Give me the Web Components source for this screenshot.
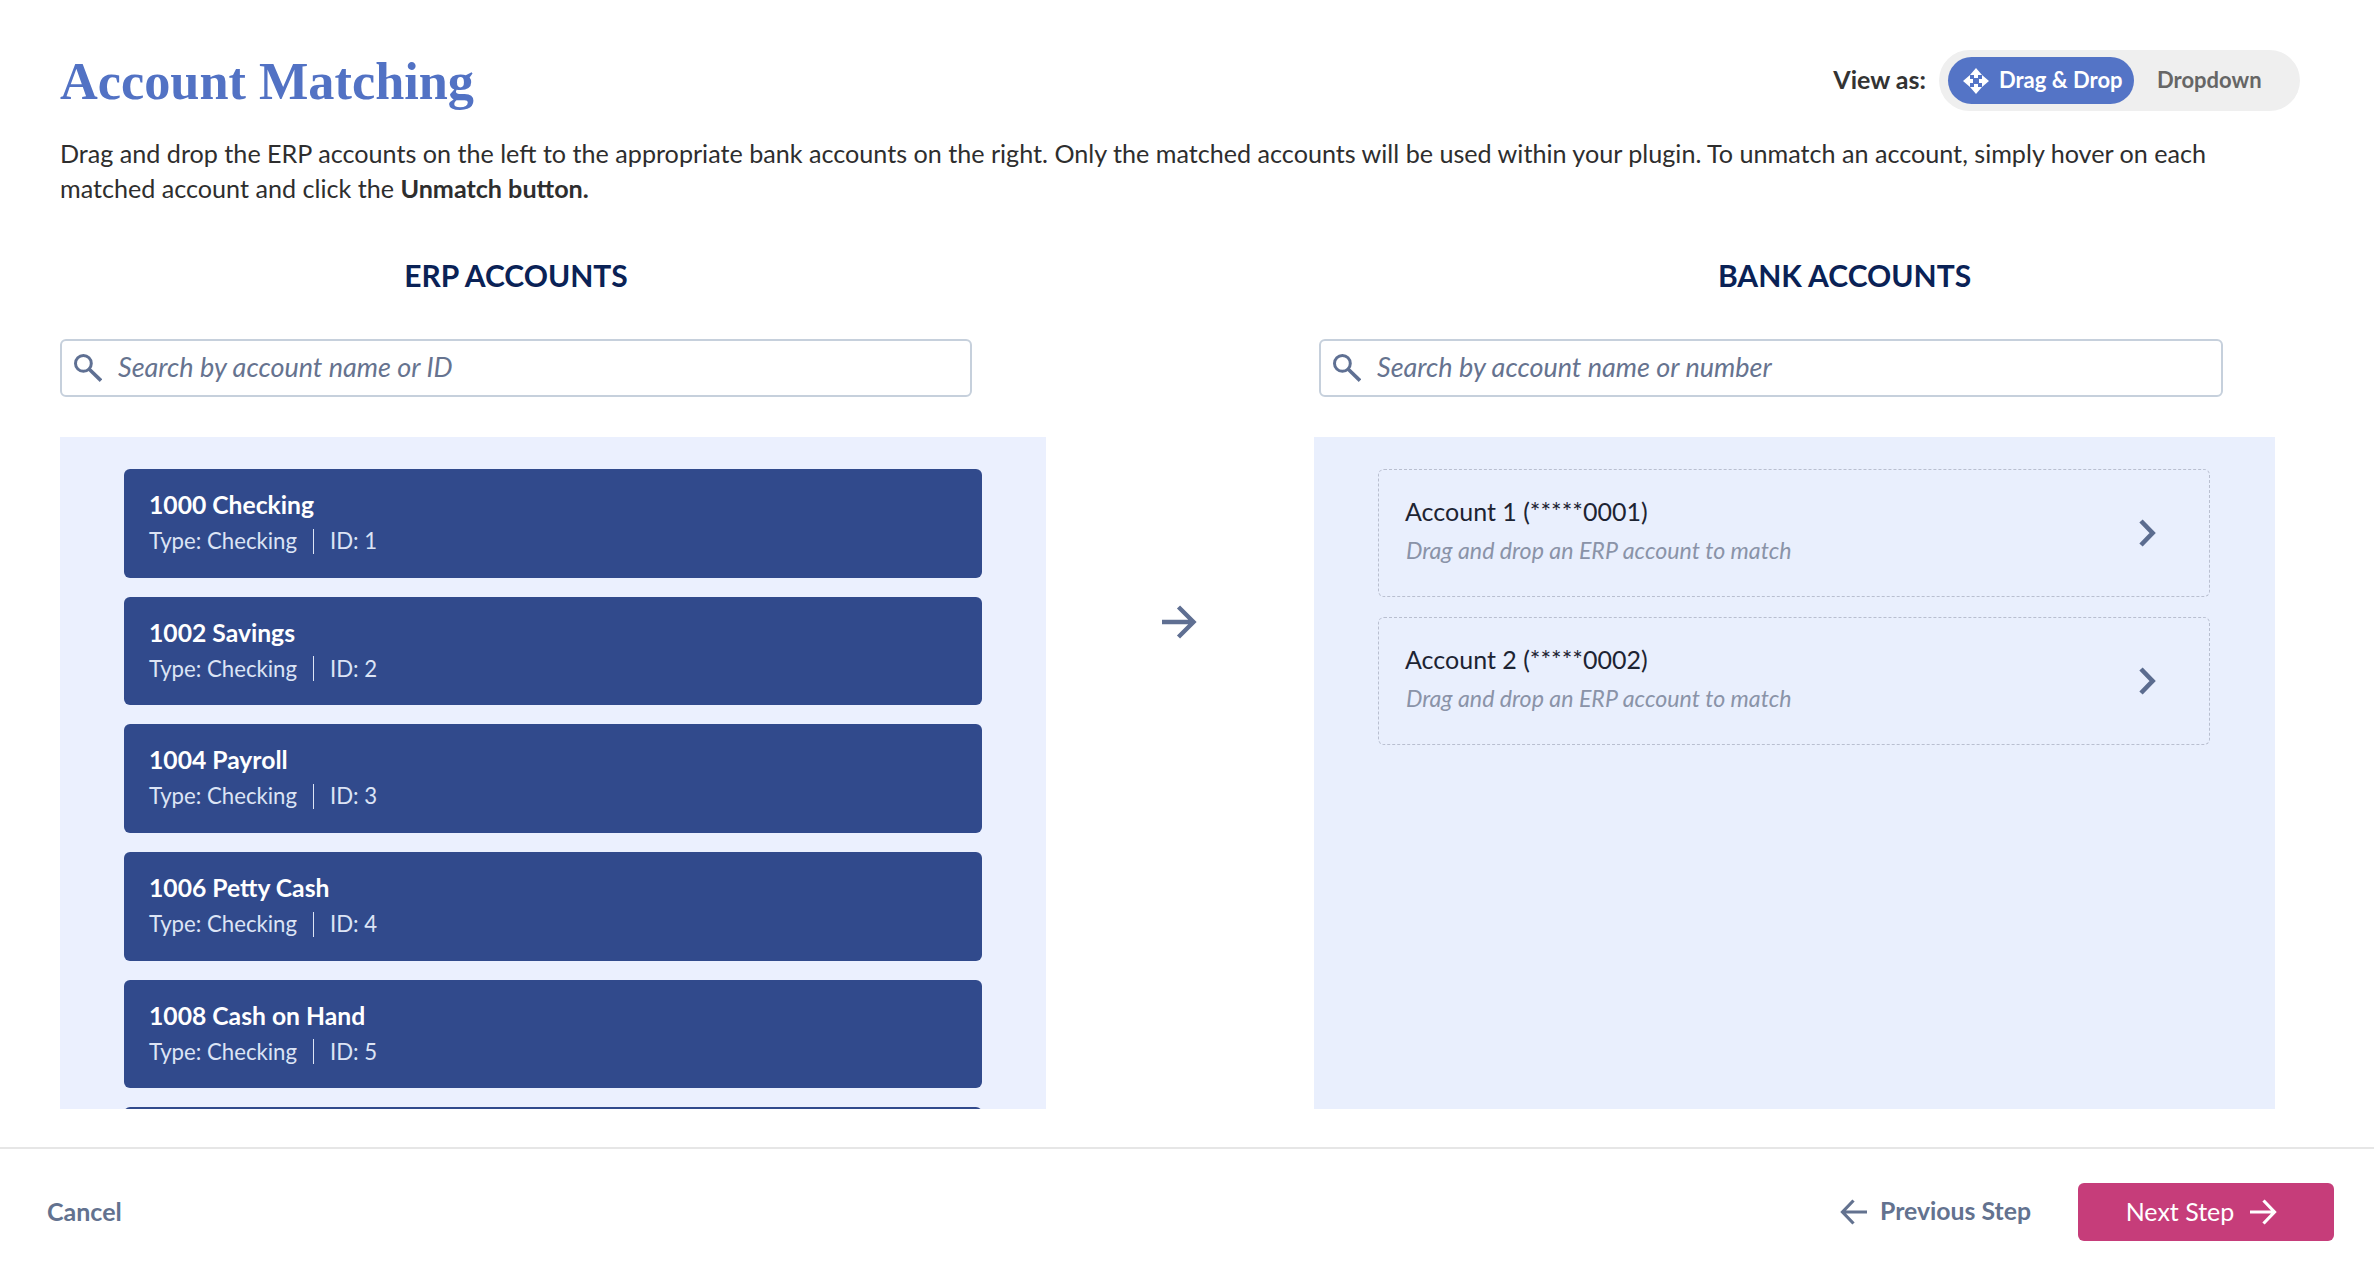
<!DOCTYPE html>
<html lang="en">
<head>
<meta charset="utf-8">
<title>Account Matching</title>
<style>
    html, body { margin: 0; height: 100%; background: #fff; }
    body { font-family: Lato, "Open Sans", sans-serif; }
</style>
</head>
<body>
<account-matching></account-matching>
<script>
const ICONS = {
    search: `<svg viewBox="0 0 28 28" width="28" height="28" fill="none" stroke="currentColor"><circle cx="9.4" cy="9.4" r="7.9" stroke-width="3"/><path d="M15 15 L27 26.6" stroke-width="3.6"/></svg>`,
    right: `<svg viewBox="0 0 36 34" width="36" height="34" fill="none" stroke="currentColor" stroke-width="4.4"><path d="M0 17 H32 M16.5 2 L31.5 17 L16.5 32"/></svg>`,
    chevron: `<svg viewBox="0 0 18 28" width="18" height="28" fill="none" stroke="currentColor" stroke-width="4.6"><path d="M3 2 L14.6 14 L3 26"/></svg>`,
    back: `<svg viewBox="0 0 27 26" width="27" height="26" fill="none" stroke="currentColor" stroke-width="3.2"><path d="M27 13 H3 M13.5 1.5 L2.5 13 L13.5 24.5"/></svg>`,
    next: `<svg viewBox="0 0 27 26" width="27" height="26" fill="none" stroke="currentColor" stroke-width="3.2"><path d="M0 13 H24 M13.5 1.5 L24.5 13 L13.5 24.5"/></svg>`,
    move: `<svg viewBox="0 0 26 26" width="26" height="26" fill="currentColor"><path d="M13 0 L19 7 H15 V10 H11 V7 H7 Z M13 26 L7 19 H11 V16 H15 V19 H19 Z M0 13 L7 7 V11 H10 V15 H7 V19 Z M26 13 L19 19 V15 H16 V11 H19 V7 Z"/></svg>`
};

class ViewToggle extends HTMLElement {
    constructor() {
        super();
        this.attachShadow( { mode: 'open' } );
    }

    connectedCallback() {
        this.shadowRoot.innerHTML = `
            <style>
                :host { display: flex; align-items: center; gap: 13px; font-size: 22px; }
                .label { font-size: 25px; font-weight: 700; color: #333; margin-top: -3px; }
                .pill {
                    display: flex;
                    align-items: center;
                    box-sizing: border-box;
                    width: 361px;
                    height: 61px;
                    padding: 0 9px;
                    background: #efefef;
                    border-radius: 31px;
                    font-weight: 700;
                }
                .active {
                    display: flex;
                    align-items: center;
                    gap: 10px;
                    box-sizing: border-box;
                    width: 186px;
                    height: 47px;
                    padding-left: 15px;
                    background: #5474c6;
                    color: #fff;
                    border-radius: 24px;
                }
                .pill span, .other { margin-top: -2px; }
                .other { padding-left: 23px; color: #666; }
                svg { display: block; }
            </style>
            <span class="label">View as:</span>
            <div class="pill">
                <div class="active">${ICONS.move}<span>Drag &amp; Drop</span></div>
                <div class="other">Dropdown</div>
            </div>
        `;
    }
}

class SearchBox extends HTMLElement {
    constructor() {
        super();
        this.attachShadow( { mode: 'open' } );
    }

    connectedCallback() {
        this.shadowRoot.innerHTML = `
            <style>
                :host {
                    display: flex;
                    align-items: center;
                    gap: 16px;
                    box-sizing: border-box;
                    height: 58px;
                    padding: 0 12px;
                    background: #fff;
                    border: 2px solid #c6d0dc;
                    border-radius: 6px;
                    color: #5f7093;
                }
                svg { display: block; flex: none; }
                span { margin-top: -3px; font-size: 27px; font-style: italic; color: #66738f; }
            </style>
            ${ICONS.search}
            <span>${this.getAttribute('placeholder')}</span>
        `;
    }
}

class ErpCard extends HTMLElement {
    constructor() {
        super();
        this.attachShadow( { mode: 'open' } );
    }

    connectedCallback() {
        const name = this.textContent.trim();
        this.shadowRoot.innerHTML = `
            <style>
                :host {
                    display: block;
                    flex: none;
                    box-sizing: border-box;
                    height: 108.5px;
                    padding: 18px 25px 0;
                    background: #314a8c;
                    border-radius: 6px;
                    color: #fff;
                }
                .name { font-size: 24.7px; font-weight: 700; line-height: 35px; }
                .meta { display: flex; align-items: center; margin-top: 6px; font-size: 22.2px; line-height: 26px; color: #dce4f5; }
                .meta i { width: 1px; height: 25px; margin: 0 16px; background: #dce4f5; }
            </style>
            ${ name ? `<div class="name"><slot></slot></div>
            <div class="meta"><span>Type: ${this.getAttribute('type')}</span><i></i><span>ID: ${this.getAttribute('account-id')}</span></div>` : '' }
        `;
    }
}

class BankSlot extends HTMLElement {
    constructor() {
        super();
        this.attachShadow( { mode: 'open' } );
    }

    connectedCallback() {
        this.shadowRoot.innerHTML = `
            <style>
                :host {
                    display: flex;
                    align-items: flex-start;
                    justify-content: space-between;
                    box-sizing: border-box;
                    height: 128px;
                    padding: 24px 53px 0 26px;
                    border: 1px dashed #b9bfd0;
                    border-radius: 6px;
                }
                .name { font-size: 25px; line-height: 34px; color: #1d2433; }
                .hint { margin-top: 6px; margin-left: 1px; font-size: 23.2px; line-height: 32px; font-style: italic; color: #8a93a8; }
                svg { display: block; margin-top: 25px; color: #5b6c8f; }
            </style>
            <div>
                <div class="name"><slot></slot></div>
                <div class="hint">Drag and drop an ERP account to match</div>
            </div>
            ${ICONS.chevron}
        `;
    }
}

class WizardFooter extends HTMLElement {
    constructor() {
        super();
        this.attachShadow( { mode: 'open' } );
    }

    connectedCallback() {
        this.shadowRoot.innerHTML = `
            <style>
                :host {
                    display: flex;
                    align-items: center;
                    box-sizing: border-box;
                    height: 115px;
                    padding: 13px 40px 0 47px;
                    border-top: 2px solid #e6e6e6;
                    font-size: 25px;
                }
                span { margin-top: -3px; }
                .cancel { font-weight: 700; color: #63728f; margin-right: auto; }
                .prev { display: flex; align-items: center; gap: 13px; font-weight: 700; font-size: 24.8px; color: #63728f; }
                .next {
                    display: flex;
                    align-items: center;
                    justify-content: center;
                    gap: 16px;
                    box-sizing: border-box;
                    width: 256px;
                    height: 58px;
                    padding-right: 9px;
                    margin-left: 47px;
                    background: #c63d7a;
                    border-radius: 6px;
                    color: #fff;
                }
                svg { display: block; }
            </style>
            <span class="cancel">Cancel</span>
            <div class="prev">${ICONS.back}<span>Previous Step</span></div>
            <div class="next"><span>Next Step</span>${ICONS.next}</div>
        `;
    }
}

class AccountMatching extends HTMLElement {
    constructor() {
        super();
        this.attachShadow( { mode: 'open' } );
    }

    connectedCallback() {
        const cards = [
            ['1000 Checking', 1], ['1002 Savings', 2], ['1004 Payroll', 3],
            ['1006 Petty Cash', 4], ['1008 Cash on Hand', 5]
        ].map( ( [name, id] ) => `<erp-card type="Checking" account-id="${id}">${name}</erp-card>` ).join('');

        this.shadowRoot.innerHTML = `
            <style>
                :host { display: flex; flex-direction: column; height: 1262px; overflow: hidden; }
                .content { flex: 1; min-height: 0; padding: 50px 74px 38px 60px; display: flex; flex-direction: column; }
                header { display: flex; justify-content: space-between; align-items: flex-start; }
                h1 { margin: 0; font: 700 52.3px/62px "Liberation Serif", serif; color: #5272c4; }
                p { margin: 24px 0 0; width: 2190px; font-size: 25.15px; line-height: 35px; color: #2e2e2e; }
                .columns { flex: 1; min-height: 0; display: grid; grid-template-columns: 986px 268px 961px; margin-top: 39px; }
                .col { display: flex; flex-direction: column; min-height: 0; }
                h2 { margin: 0 0 34px; height: 60px; font-size: 30px; line-height: 60px; font-weight: 700; text-align: center; color: #0a2256; }
                .erp h2 { width: 912px; }
                .bank h2 { padding-left: 100px; }
                .erp search-box { width: 912px; }
                .bank search-box { width: 904px; margin-left: 5px; }
                .panel { flex: 1; min-height: 0; margin-top: 40px; overflow: hidden; box-sizing: border-box; display: flex; flex-direction: column; }
                .erp .panel { padding: 32px 64px 0; gap: 19.2px; background: #ebf0fe; }
                .bank .panel { padding: 32px 65px 0 64px; gap: 20px; background: #e9effd; }
                .arrow { align-self: start; padding-top: 360px; display: flex; justify-content: center; color: #5f6f92; }
                .arrow svg { display: block; }
            </style>
            <div class="content">
                <header>
                    <h1>Account Matching</h1>
                    <view-toggle></view-toggle>
                </header>
                <p>Drag and drop the ERP accounts on the left to the appropriate bank accounts on the right. Only the matched accounts will be used within your plugin. To unmatch an account, simply hover on each matched account and click the <b>Unmatch button.</b></p>
                <div class="columns">
                    <section class="col erp">
                        <h2>ERP ACCOUNTS</h2>
                        <search-box placeholder="Search by account name or ID"></search-box>
                        <div class="panel">${cards}<erp-card></erp-card></div>
                    </section>
                    <div class="arrow">${ICONS.right}</div>
                    <section class="col bank">
                        <h2>BANK ACCOUNTS</h2>
                        <search-box placeholder="Search by account name or number"></search-box>
                        <div class="panel">
                            <bank-slot>Account 1 (*****0001)</bank-slot>
                            <bank-slot>Account 2 (*****0002)</bank-slot>
                        </div>
                    </section>
                </div>
            </div>
            <wizard-footer></wizard-footer>
        `;
    }
}

customElements.define( 'view-toggle', ViewToggle );
customElements.define( 'search-box', SearchBox );
customElements.define( 'erp-card', ErpCard );
customElements.define( 'bank-slot', BankSlot );
customElements.define( 'wizard-footer', WizardFooter );
customElements.define( 'account-matching', AccountMatching );
</script>
</body>
</html>
